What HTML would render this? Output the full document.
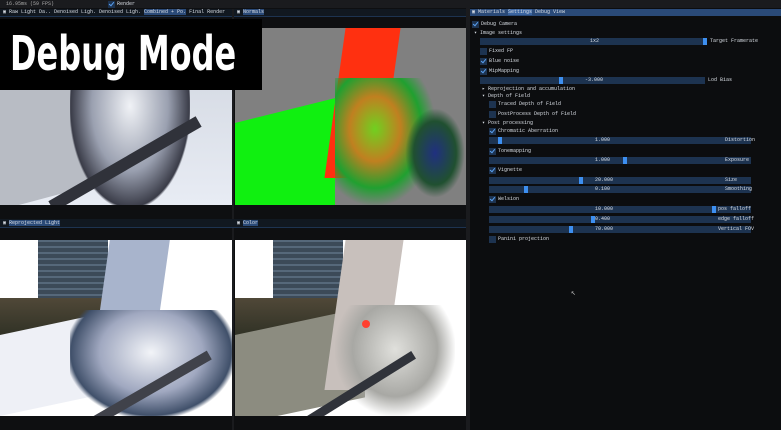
<!DOCTYPE html>
<html><head><style>
*{margin:0;padding:0;box-sizing:border-box}
body{width:781px;height:430px;background:#0e0f11;position:relative;overflow:hidden;font-family:"Liberation Mono",monospace;font-size:5px;color:#d8dde4}
div{position:absolute}
.s{background:#1d3350;height:7px}
.k{background:#1d3350;width:7px;height:7px}
.k.c::after{content:"";position:absolute;left:2px;top:0px;width:2px;height:4px;border:solid #5aa0f0;border-width:0 1.5px 1.5px 0;transform:rotate(40deg)}
.g{background:#3d8ff0;width:4px;height:7px}
.t{white-space:nowrap;line-height:7px}
</style></head><body>
<div style="left:0;top:0;width:781px;height:8px;background:#1a1b1e"></div>
<div class="t" style="left:6px;top:1px;color:#aaa">16.95ms (59 FPS)</div>
<div class="k c" style="left:108px;top:1px"></div><div class="t" style="left:117px;top:1px">Render</div>
<div style="left:0;top:9px;width:466px;height:7px;background:#111820"></div>
<div class="t" style="left:3px;top:9px">▣ Raw Light Da.. Denoised Ligh. Denoised Ligh. <span style="background:#2a4a78">Combined + Po.</span> Final Render</div>
<div class="t" style="left:237px;top:9px">▣ <span style="background:#2a4a78">Normals</span></div>
<div style="left:0;top:16px;width:466px;height:1px;background:#1d3350"></div>
<div style="left:232px;top:9px;width:2px;height:421px;background:#1a1b1e"></div>
<div style="left:466px;top:8px;width:4px;height:422px;background:#1a1b1e"></div>

<div style="left:0;top:28px;width:232px;height:177px;background:linear-gradient(180deg,#1c1c22 0,#2a2a30 25%,#d8dde6 35%,#e8ecf4 100%);overflow:hidden">
 <div style="left:0;top:30px;width:90px;height:140px;background:#b8bcc4;transform:skewY(-15deg)"></div>
 <div style="left:150px;top:0;width:82px;height:60px;background:linear-gradient(#eef2f8,#dfe4ec)"></div>
 <div style="left:70px;top:10px;width:120px;height:170px;background:radial-gradient(ellipse at 50% 40%,#f0f2f6 0,#9aa0b0 45%,#3a3c48 70%,transparent 72%)"></div>
 <div style="left:128px;top:32px;width:9px;height:9px;border-radius:50%;background:#ff6a30"></div>
 <div style="left:40px;top:130px;width:170px;height:12px;background:#30323a;transform:rotate(-30deg)"></div>
</div>
<div style="left:235px;top:28px;width:231px;height:177px;background:#808080;overflow:hidden">
 <div style="left:0;top:95px;width:100px;height:120px;background:#10f010;transform:skewY(-14deg);transform-origin:0 0"></div>
 <div style="left:100px;top:0;width:55px;height:150px;background:#ff3010;transform:skewX(-8deg)"></div>
 <div style="left:100px;top:50px;width:100px;height:127px;background:radial-gradient(ellipse at 40% 40%,#70d020 0,#c08020 30%,#20a030 55%,transparent 72%)"></div>
 <div style="left:170px;top:80px;width:60px;height:90px;background:radial-gradient(ellipse,#203080 0,#205030 50%,transparent 70%)"></div>
</div>
<div style="left:0;top:19px;width:262px;height:71px;background:#000"></div>
<div class="t" style="left:10px;top:26px;font-family:'DejaVu Sans Condensed','Liberation Sans Narrow',sans-serif;font-weight:bold;font-size:48px;line-height:56px;color:#fff;transform:scaleX(0.74);transform-origin:0 0">Debug Mode</div>

<div style="left:0;top:219px;width:466px;height:8px;background:#111820"></div>
<div class="t" style="left:3px;top:220px">▣ <span style="background:#2a4a78">Reprojected Light</span></div>
<div class="t" style="left:237px;top:220px">▣ <span style="background:#2a4a78">Color</span></div>
<div style="left:0;top:227px;width:466px;height:1px;background:#1d3350"></div>

<div style="left:0;top:240px;width:232px;height:176px;background:#fff;overflow:hidden">
 <div style="left:38px;top:0;width:70px;height:60px;background:repeating-linear-gradient(0deg,#3c4a58 0 4px,#56687a 4px 6px)"></div>
 <div style="left:0;top:58px;width:110px;height:40px;background:linear-gradient(#504838,#2e3024)"></div>
 <div style="left:0;top:95px;width:120px;height:81px;background:#eef0f6;transform:skewY(-12deg);transform-origin:0 0"></div>
 <div style="left:100px;top:0;width:60px;height:140px;background:#a8b4cc;transform:skewX(-8deg)"></div>
 <div style="left:70px;top:70px;width:162px;height:106px;background:radial-gradient(ellipse at 50% 40%,#f2f4f8 0,#a0a8c0 45%,#40506a 70%,transparent 75%)"></div>
 <div style="left:60px;top:150px;width:160px;height:10px;background:#40424a;transform:rotate(-30deg)"></div>
</div>
<div style="left:235px;top:240px;width:231px;height:176px;background:#fff;overflow:hidden">
 <div style="left:38px;top:0;width:70px;height:60px;background:repeating-linear-gradient(0deg,#3c4a58 0 4px,#56687a 4px 6px)"></div>
 <div style="left:0;top:58px;width:110px;height:40px;background:linear-gradient(#504838,#2e3024)"></div>
 <div style="left:0;top:95px;width:130px;height:90px;background:#8c8c80;transform:skewY(-12deg);transform-origin:0 0"></div>
 <div style="left:100px;top:0;width:58px;height:150px;background:#c8c0bc;transform:skewX(-8deg)"></div>
 <div style="left:100px;top:65px;width:120px;height:111px;background:radial-gradient(ellipse at 50% 40%,#e0e0dc 0,#a8a8a4 50%,transparent 72%)"></div>
 <div style="left:127px;top:80px;width:8px;height:8px;border-radius:50%;background:#ff4030"></div>
 <div style="left:40px;top:150px;width:150px;height:9px;background:#30333a;transform:rotate(-32deg)"></div>
</div>

<div style="left:470px;top:8px;width:311px;height:422px;background:#0c0d0f"></div>
<div style="left:470px;top:9px;width:311px;height:7px;background:#2a4a78"></div>
<div class="t" style="left:472px;top:9px">▣ Materials <span style="background:#3a64a0">Settings</span> Debug View</div>

<div class="k c" style="left:472px;top:21px"></div><div class="t" style="left:481px;top:21px">Debug Camera</div>
<div class="t" style="left:474px;top:30px">▾ Image settings</div>
<div class="s" style="left:480px;top:38px;width:225px"></div><div class="g" style="left:703px;top:38px"></div><div class="t" style="left:590px;top:38px">1x2</div><div class="t" style="left:710px;top:38px">Target Framerate</div>
<div class="k" style="left:480px;top:48px"></div><div class="t" style="left:489px;top:48px">Fixed FP</div>
<div class="k c" style="left:480px;top:58px"></div><div class="t" style="left:489px;top:58px">Blue noise</div>
<div class="k c" style="left:480px;top:68px"></div><div class="t" style="left:489px;top:68px">MipMapping</div>
<div class="s" style="left:480px;top:77px;width:225px"></div><div class="g" style="left:559px;top:77px"></div><div class="t" style="left:585px;top:77px">-3.000</div><div class="t" style="left:708px;top:77px">Lod Bias</div>
<div class="t" style="left:482px;top:86px">▸ Reprojection and accumulation</div>
<div class="t" style="left:482px;top:93px">▾ Depth of Field</div>
<div class="k" style="left:489px;top:101px"></div><div class="t" style="left:498px;top:101px">Traced Depth of Field</div>
<div class="k" style="left:489px;top:111px"></div><div class="t" style="left:498px;top:111px">PostProcess Depth of Field</div>
<div class="t" style="left:482px;top:120px">▾ Post processing</div>
<div class="k c" style="left:489px;top:128px"></div><div class="t" style="left:498px;top:128px">Chromatic Aberration</div>
<div class="s" style="left:489px;top:137px;width:262px"></div><div class="g" style="left:498px;top:137px"></div><div class="t" style="left:595px;top:137px">1.000</div><div class="t" style="left:725px;top:137px">Distortion</div>
<div class="k c" style="left:489px;top:148px"></div><div class="t" style="left:498px;top:148px">Tonemapping</div>
<div class="s" style="left:489px;top:157px;width:262px"></div><div class="g" style="left:623px;top:157px"></div><div class="t" style="left:595px;top:157px">1.000</div><div class="t" style="left:725px;top:157px">Exposure</div>
<div class="k c" style="left:489px;top:167px"></div><div class="t" style="left:498px;top:167px">Vignette</div>
<div class="s" style="left:489px;top:177px;width:262px"></div><div class="g" style="left:579px;top:177px"></div><div class="t" style="left:595px;top:177px">20.000</div><div class="t" style="left:725px;top:177px">Size</div>
<div class="s" style="left:489px;top:186px;width:262px"></div><div class="g" style="left:524px;top:186px"></div><div class="t" style="left:595px;top:186px">0.100</div><div class="t" style="left:725px;top:186px">Smoothing</div>
<div class="k c" style="left:489px;top:196px"></div><div class="t" style="left:498px;top:196px">Welsion</div>
<div class="s" style="left:489px;top:206px;width:262px"></div><div class="g" style="left:712px;top:206px"></div><div class="t" style="left:595px;top:206px">10.000</div><div class="t" style="left:718px;top:206px">pos falloff</div>
<div class="s" style="left:489px;top:216px;width:262px"></div><div class="g" style="left:591px;top:216px"></div><div class="t" style="left:595px;top:216px">0.400</div><div class="t" style="left:718px;top:216px">edge falloff</div>
<div class="s" style="left:489px;top:226px;width:262px"></div><div class="g" style="left:569px;top:226px"></div><div class="t" style="left:595px;top:226px">70.000</div><div class="t" style="left:718px;top:226px">Vertical FOV</div>
<div class="k" style="left:489px;top:236px"></div><div class="t" style="left:498px;top:236px">Panini projection</div>
<div class="t" style="left:571px;top:290px;color:#bbb;font-size:8px">↖</div>
</body></html>
